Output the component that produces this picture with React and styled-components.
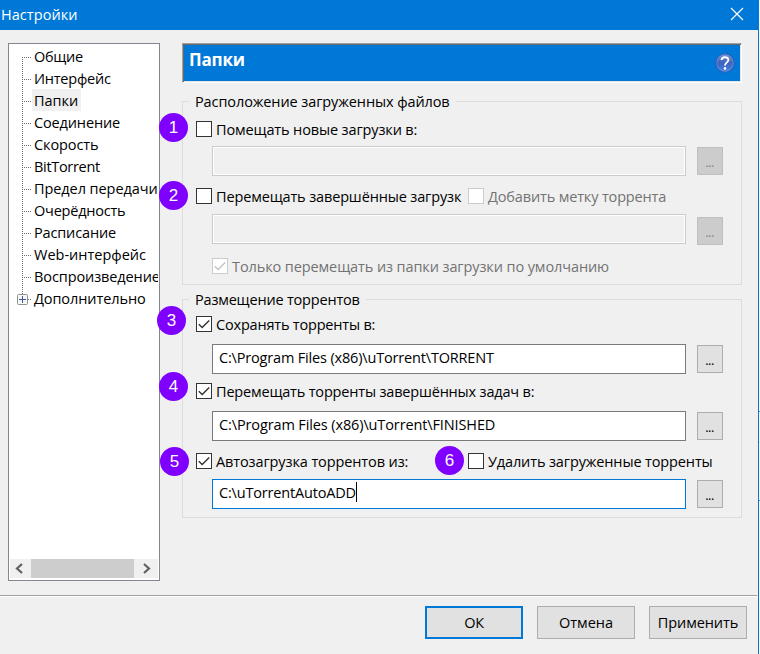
import React from 'react';
import styled, { createGlobalStyle, css } from 'styled-components';

const Global = createGlobalStyle`
  * { box-sizing: border-box; }
  body {
    margin: 0;
    overflow: hidden;
    background:
      linear-gradient(#4a9be0, #4a9be0) 759px 411px / 1px 1px no-repeat,
      linear-gradient(#c9dff2, #c9dff2) 759px 442px / 1px 1px no-repeat,
      linear-gradient(#4a9be0, #4a9be0) 759px 500px / 1px 1px no-repeat,
      #fff;
  }
`;

const Window = styled.div`
  position: relative;
  display: flex;
  flex-direction: column;
  width: 759px;
  height: 654px;
  border-right: 1px solid #0078d7;
  background: #f0f0f0;
  color: #000;
  font: 14.5px/20px "Open Sans", "Noto Sans", sans-serif;
  white-space: nowrap;
`;

const TitleBar = styled.header`
  display: flex;
  justify-content: space-between;
  height: 30px;
  padding: 5px 14px 0 1px;
  background: #0078d7;
  color: #fff;
`;

const Title = styled.span`
  letter-spacing: 0.05px;
`;

const CloseIcon = styled.svg`
  width: 14px;
  height: 14px;
  margin-top: 2px;
  stroke: #fff;
  stroke-width: 1.2;
`;

const Main = styled.main`
  display: flex;
  gap: 22px;
  height: 565px;
  padding: 13px 0 0 8px;
`;

const Sidebar = styled.nav`
  display: flex;
  flex-direction: column;
  justify-content: space-between;
  width: 152px;
  height: 538px;
  padding: 1px;
  border: 1px solid #828790;
  background: #fff;
`;

const Tree = styled.ul`
  margin: 0;
  padding: 0 0 0 12px;
  list-style: none;
  overflow: hidden;
`;

const dots = 'repeating-linear-gradient(to right, #6e6e6e 0 1px, transparent 1px 2px)';
const dotsDown = 'repeating-linear-gradient(to bottom, #6e6e6e 0 1px, transparent 1px 2px)';

const TreeItem = styled.li`
  display: flex;
  height: 22px;
  padding-left: 10px;
  background:
    ${dots} 0 12px / 10px 1px no-repeat,
    ${dotsDown} 0 ${(p) => (p.$first ? 12 : 0)}px / 1px ${(p) => (p.$last ? 12 : 22)}px no-repeat;
`;

const TreeLabel = styled.span`
  height: 22px;
  padding: 2px 3px 0 2px;
  letter-spacing: ${(p) => p.$track}px;
  ${(p) => p.$selected && css`background: #f0f0f0;`}
`;

const Expander = styled.svg`
  flex: none;
  display: block;
  width: 11px;
  height: 11px;
  margin: 7px 4px 0 -15px;
`;

const ScrollBar = styled.div`
  display: grid;
  grid-template-columns: 21px 103px 1fr;
  width: 148px;
  height: 19px;
  margin-bottom: 1px;
  background: #f0f0f0;
`;

const ScrollArrow = styled.svg`
  display: block;
  width: 10px;
  height: 11px;
  margin: 4px 0 0 ${(p) => (p.$right ? 8 : 4)}px;
  fill: none;
  stroke: #606060;
  stroke-width: 2.2;
`;

const Thumb = styled.div`
  background: #cdcdcd;
`;

const Panel = styled.section`
  display: flex;
  flex-direction: column;
  width: 560px;
`;

const Banner = styled.div`
  display: flex;
  justify-content: space-between;
  height: 40px;
  padding: 0 6px 0 5px;
  border: 1px solid;
  border-color: #a0a0a0 #fff #fff #a0a0a0;
  box-shadow: inset 1px 1px 0 #696969, inset -1px -1px 0 #e3e3e3;
  background: #0078d7;
  color: #fff;
`;

const BannerTitle = styled.h1`
  margin: 0;
  padding: 4px 0 0 1px;
  font-size: 17px;
  font-weight: 700;
  line-height: 24px;
  letter-spacing: -0.2px;
`;

const HelpIcon = styled.svg`
  width: 20px;
  height: 20px;
  margin-top: 9px;
`;

const Group = styled.section`
  display: flex;
  flex-direction: column;
  height: ${(p) => p.$height}px;
  margin-top: ${(p) => p.$top}px;
  border: 1px solid #dcdcdc;
`;

const Legend = styled.h2`
  align-self: flex-start;
  height: 20px;
  margin: -10px 0 0 6px;
  padding: 0 6px 0 6px;
  background: #f0f0f0;
  font-size: inherit;
  font-weight: 400;
  letter-spacing: ${(p) => p.$track}px;
`;

const OptionRow = styled.div`
  display: grid;
  grid-template-columns: 272px 1fr;
  height: 16px;
  margin: ${(p) => p.$top}px 0 0 ${(p) => (p.$indent ? 29 : 13)}px;
`;

const Option = styled.label`
  display: flex;
  align-items: flex-start;
  color: ${(p) => (p.$disabled ? '#737373' : '#000')};
`;

const Caption = styled.span`
  margin: -1px 0 0 4px;
  letter-spacing: ${(p) => p.$track}px;
`;

const Box = styled.svg`
  flex: none;
  display: block;
  width: 16px;
  height: 16px;
  border: 1px solid ${(p) => (p.$disabled ? '#ccc' : '#333')};
  background: #fff;
  fill: none;
  stroke: ${(p) => (p.$disabled ? '#c4c4c4' : '#333')};
  stroke-width: 1.4;
`;

const PathRow = styled.div`
  display: flex;
  align-items: flex-start;
  gap: 11px;
  height: 30px;
  margin: ${(p) => p.$top}px 0 0 29px;
`;

const fieldState = {
  disabled: css`border-color: #ccc; box-shadow: inset 0 0 0 1px #fff; background: #f0f0f0;`,
  normal: css`border-color: #7a7a7a; background: #fff;`,
  focus: css`border-color: #0078d7; background: #fff;`,
};

const Field = styled.div`
  display: flex;
  width: 474px;
  height: 30px;
  padding: 3px 6px;
  border: 1px solid;
  letter-spacing: ${(p) => p.$track}px;
  ${(p) => fieldState[p.$state]}
`;

const Caret = styled.i`
  width: 1px;
  height: 20px;
  margin-top: -1px;
  background: #000;
`;

const BrowseButton = styled.button`
  width: 26px;
  height: 28px;
  margin-top: ${(p) => p.$drop ?? 1}px;
  padding: 1px 1px 0 0;
  border: 1px solid ${(p) => (p.disabled ? '#bfbfbf' : '#adadad')};
  background: ${(p) => (p.disabled ? '#ccc' : '#e1e1e1')};
  color: ${(p) => (p.disabled ? '#838383' : '#000')};
  font: 13px/20px "Open Sans", sans-serif;
  letter-spacing: -0.5px;
`;

const Footer = styled.footer`
  display: flex;
  justify-content: flex-end;
  gap: 14px;
  height: 59px;
  margin-right: 1px;
  padding: 10px 10px 0 0;
  border-top: 1px solid #a0a0a0;
  box-shadow: inset 0 1px 0 #fff;
`;

const DialogButton = styled.button`
  width: 98px;
  height: 33px;
  padding: 0;
  border: ${(p) => (p.$primary ? '2px solid #0078d7' : '1px solid #adadad')};
  background: #e1e1e1;
  color: #000;
  font: inherit;
  letter-spacing: ${(p) => p.$track}px;
`;

const Badge = styled.span`
  position: absolute;
  left: ${(p) => p.$x - 14.75}px;
  top: ${(p) => p.$y - 14.75}px;
  width: 29.5px;
  height: 29.5px;
  border-radius: 50%;
  background: #7f00ff;
  color: #fff;
  font: 17px/30px "Liberation Sans", Arial, sans-serif;
  text-align: center;
`;

const sections = [
  ['Общие', -0.28],
  ['Интерфейс', -0.22],
  ['Папки', -0.02],
  ['Соединение', -0.14],
  ['Скорость', -0.1],
  ['BitTorrent', -0.31],
  ['Предел передачи', -0.07],
  ['Очерёдность', -0.22],
  ['Расписание', -0.15],
  ['Web-интерфейс', 0],
  ['Воспроизведение', -0.1],
  ['Дополнительно', -0.09],
];

const badges = [
  [1, 173.5, 127.5],
  [2, 173.5, 195.5],
  [3, 171.5, 320.5],
  [4, 173.5, 386.5],
  [5, 174.5, 461.5],
  [6, 449.5, 460.5],
];

function Check({ label, track, checked, disabled }) {
  return (
    <Option $disabled={disabled}>
      <Box viewBox="0 0 14 14" $disabled={disabled}>
        {checked && <path d="M1.8 7.2 L5.2 10.6 L12.2 3.4" />}
      </Box>
      <Caption $track={track}>{label}</Caption>
    </Option>
  );
}

function PathField({ top, value, track, state = 'normal', drop }) {
  return (
    <PathRow $top={top}>
      <Field $state={state} $track={track}>
        {value}
        {state === 'focus' && <Caret />}
      </Field>
      <BrowseButton $drop={drop} disabled={state === 'disabled'}>...</BrowseButton>
    </PathRow>
  );
}

export default function App() {
  const last = sections.length - 1;
  return (
    <>
      <Global />
      <Window>
        <TitleBar>
          <Title>Настройки</Title>
          <CloseIcon viewBox="0 0 14 14">
            <path d="M1 1 L13 13 M13 1 L1 13" />
          </CloseIcon>
        </TitleBar>
        <Main>
          <Sidebar>
            <Tree>
              {sections.map(([name, track], i) => (
                <TreeItem key={name} $first={i === 0} $last={i === last}>
                  {i === last && (
                    <Expander viewBox="0 0 11 11">
                      <rect x=".5" y=".5" width="10" height="10" rx="1" fill="#f6f6f6" stroke="#919191" />
                      <path d="M2 5.5h7M5.5 2v7" stroke="#3a5a9c" />
                    </Expander>
                  )}
                  <TreeLabel $track={track} $selected={name === 'Папки'}>{name}</TreeLabel>
                </TreeItem>
              ))}
            </Tree>
            <ScrollBar>
              <ScrollArrow viewBox="0 0 10 11"><path d="M8 1 L3 5.5 L8 10" /></ScrollArrow>
              <Thumb />
              <ScrollArrow $right viewBox="0 0 10 11"><path d="M2 1 L7 5.5 L2 10" /></ScrollArrow>
            </ScrollBar>
          </Sidebar>
          <Panel>
            <Banner>
              <BannerTitle>Папки</BannerTitle>
              <HelpIcon viewBox="0 0 20 20">
                <defs>
                  <linearGradient id="orb" x1="0" y1="0" x2="0" y2="1">
                    <stop offset="0" stopColor="#6f8fd4" />
                    <stop offset=".5" stopColor="#3d62bd" />
                    <stop offset="1" stopColor="#3f86ea" />
                  </linearGradient>
                </defs>
                <circle cx="10" cy="10" r="9.2" fill="url(#orb)" stroke="#3457a8" strokeWidth="1" />
                <circle cx="10" cy="10" r="8.2" fill="none" stroke="#7fa0e0" strokeWidth=".8" opacity=".7" />
                <path d="M6.6 7 C6.6 3.4 13.4 3.2 13.4 6.9 C13.4 9.4 10 9.4 10 12.6" fill="none" stroke="#fff" strokeWidth="1.9" />
                <circle cx="10" cy="15.4" r="1.3" fill="#fff" />
              </HelpIcon>
            </Banner>
            <Group $top={18} $height={184}>
              <Legend $track={-0.1}>Расположение загруженных файлов</Legend>
              <OptionRow $top={9}>
                <Check label="Помещать новые загрузки в:" track={-0.13} />
              </OptionRow>
              <PathField top={9} state="disabled" />
              <OptionRow $top={12}>
                <Check label="Перемещать завершённые загрузк" track={-0.14} />
                <Check label="Добавить метку торрента" track={-0.15} disabled />
              </OptionRow>
              <PathField top={10} state="disabled" drop={3} />
              <OptionRow $top={14} $indent>
                <Check label="Только перемещать из папки загрузки по умолчанию" track={-0.1} checked disabled />
              </OptionRow>
            </Group>
            <Group $top={14} $height={219}>
              <Legend $track={-0.19}>Размещение торрентов</Legend>
              <OptionRow $top={6}>
                <Check label="Сохранять торренты в:" track={-0.19} checked />
              </OptionRow>
              <PathField top={12} value="C:\Program Files (x86)\uTorrent\TORRENT" track={-0.17} />
              <OptionRow $top={9}>
                <Check label="Перемещать торренты завершённых задач в:" track={-0.18} checked />
              </OptionRow>
              <PathField top={12} value="C:\Program Files (x86)\uTorrent\FINISHED" track={-0.12} />
              <OptionRow $top={12}>
                <Check label="Автозагрузка торрентов из:" track={-0.11} checked />
                <Check label="Удалить загруженные торренты" track={-0.13} />
              </OptionRow>
              <PathField top={10} value="C:\uTorrentAutoADD" track={-0.18} state="focus" />
            </Group>
          </Panel>
        </Main>
        <Footer>
          <DialogButton $primary $track={-0.28}>ОК</DialogButton>
          <DialogButton $track={0}>Отмена</DialogButton>
          <DialogButton $track={-0.08}>Применить</DialogButton>
        </Footer>
        {badges.map(([n, x, y]) => <Badge key={n} $x={x} $y={y}>{n}</Badge>)}
      </Window>
    </>
  );
}
